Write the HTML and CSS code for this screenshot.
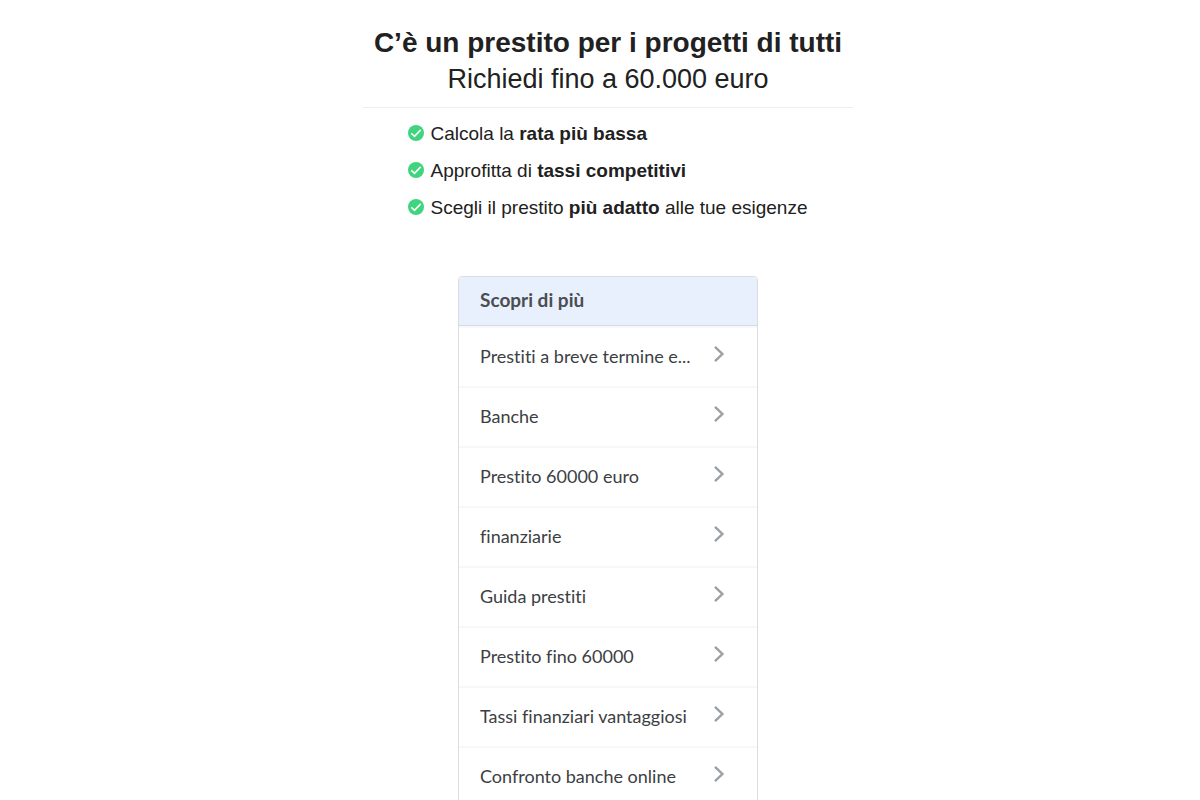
FILE: index.html
```html
<!DOCTYPE html>
<html lang="it">
<head>
<meta charset="utf-8">
<meta name="viewport" content="width=device-width, initial-scale=1">
<title>Prestiti</title>
<link rel="stylesheet" href="styles.css">
</head>
<body>
<svg class="defs" aria-hidden="true">
  <symbol id="check" viewBox="0 0 16 16"><circle cx="8" cy="8" r="8" fill="#40d47e"/><path d="M3.3 8.2l3.2 3.1 6.2-6.4" fill="none" stroke="#fff" stroke-width="1.6"/></symbol>
  <symbol id="chevron" viewBox="0 0 12 18"><path d="M2 1.8L9.4 9 2 16.2" fill="none" stroke="#9aa0a6" stroke-width="2.4"/></symbol>
</svg>
<main class="page">
  <header class="intro">
    <h1 class="title">C’è un prestito per i progetti di tutti</h1>
    <p class="subtitle">Richiedi fino a 60.000 euro</p>
  </header>
  <ul class="benefits">
    <li class="benefit"><svg class="check"><use href="#check"/></svg><span>Calcola la <b>rata più bassa</b></span></li>
    <li class="benefit"><svg class="check"><use href="#check"/></svg><span>Approfitta di <b>tassi competitivi</b></span></li>
    <li class="benefit"><svg class="check"><use href="#check"/></svg><span>Scegli il prestito <b>più adatto</b> alle tue esigenze</span></li>
  </ul>
  <nav class="related" aria-labelledby="related-title">
    <h2 class="related-title" id="related-title">Scopri di più</h2>
    <a class="item" href="#"><span class="label">Prestiti a breve termine e...</span><svg class="chevron"><use href="#chevron"/></svg></a>
    <a class="item" href="#"><span class="label">Banche</span><svg class="chevron"><use href="#chevron"/></svg></a>
    <a class="item" href="#"><span class="label">Prestito 60000 euro</span><svg class="chevron"><use href="#chevron"/></svg></a>
    <a class="item" href="#"><span class="label">finanziarie</span><svg class="chevron"><use href="#chevron"/></svg></a>
    <a class="item" href="#"><span class="label">Guida prestiti</span><svg class="chevron"><use href="#chevron"/></svg></a>
    <a class="item" href="#"><span class="label">Prestito fino 60000</span><svg class="chevron"><use href="#chevron"/></svg></a>
    <a class="item" href="#"><span class="label">Tassi finanziari vantaggiosi</span><svg class="chevron"><use href="#chevron"/></svg></a>
    <a class="item" href="#"><span class="label">Confronto banche online</span><svg class="chevron"><use href="#chevron"/></svg></a>
  </nav>
</main>
</body>
</html>
```
FILE: styles.css
```css
* { box-sizing: border-box; }
body {
  margin: 0;
  background: #fff;
  color: #212121;
  font-family: "Liberation Sans", Arial, sans-serif;
}
.defs { position: absolute; width: 0; height: 0; }
.page {
  display: flex;
  flex-direction: column;
  align-items: center;
  padding: 25px 0 0 16px;
}
.intro {
  width: 100%;
  max-width: 490px;
  padding-bottom: 10px;
  border-bottom: 1px solid #eee;
  text-align: center;
}
.title, .subtitle { margin: 0; font-size: 28px; line-height: 36px; }
.subtitle { font-size: 27px; }
.benefits {
  display: flex;
  flex-direction: column;
  gap: 13px;
  margin: 14px 0 56px;
  padding: 0;
  list-style: none;
}
.benefit { display: flex; gap: 6px; font-size: 19px; line-height: 24px; }
.check { flex: none; width: 16px; height: 16px; margin-top: 3px; }
.related {
  width: 100%;
  max-width: 300px;
  border: 1px solid #dadce0;
  border-radius: 4px 4px 0 0;
  font-family: Lato, sans-serif;
  font-variant-ligatures: no-common-ligatures;
  color: #3c4043;
}
.related-title {
  margin: 0;
  padding: 11px 21px 13px;
  background: #e8f0fe;
  border-bottom: 1px solid #d2dbe8;
  border-radius: 3px 3px 0 0;
  color: #4a4d51;
  font-size: 19px;
  line-height: 24px;
}
.item {
  display: flex;
  align-items: flex-start;
  justify-content: space-between;
  padding: 17px 32px 19px 21px;
  border-top: 2px solid #f8f8f8;
  color: inherit;
  font-size: 18px;
  line-height: 22px;
  text-decoration: none;
}
.label { white-space: nowrap; }
.chevron { flex: none; width: 12px; height: 18px; }
```
